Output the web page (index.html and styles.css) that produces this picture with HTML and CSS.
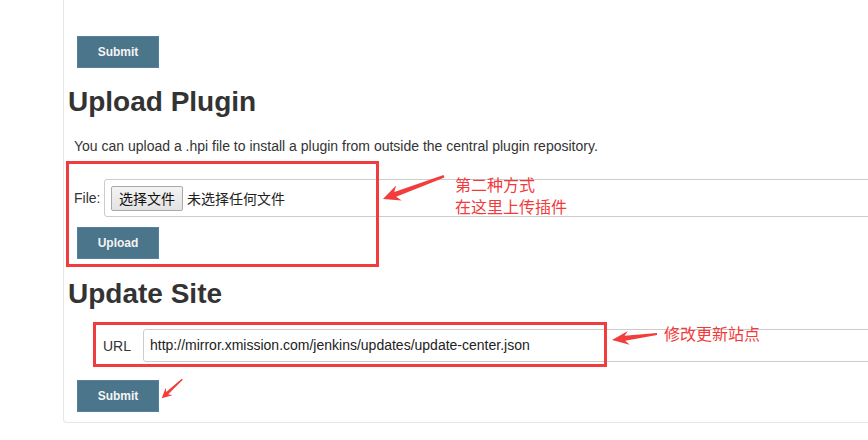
FILE: index.html
```html
<!DOCTYPE html>
<html lang="zh">
<head>
<meta charset="utf-8">
<title>Plugin Manager - Advanced</title>
<link rel="stylesheet" href="styles.css">
</head>
<body>
<div class="panel">
  <button class="btn">Submit</button>
  <h2 class="heading">Upload Plugin</h2>
  <p class="desc">You can upload a .hpi file to install a plugin from outside the central plugin repository.</p>
  <div class="file-row">
    <span class="file-label">File:</span>
    <div class="file-box">
      <span class="file-btn">选择文件</span>
      <span class="file-none">未选择任何文件</span>
    </div>
  </div>
  <button class="btn btn-upload">Upload</button>
  <h2 class="heading heading-site">Update Site</h2>
  <div class="url-row">
    <span class="url-label">URL</span>
    <div class="url-box">http://mirror.xmission.com/jenkins/updates/update-center.json</div>
  </div>
  <button class="btn btn-submit2">Submit</button>
</div>

<svg class="marks" width="868" height="440" viewBox="0 0 868 440">
  <rect x="67.5" y="162.5" width="310" height="103" fill="none" stroke="#f03c3c" stroke-width="3"/>
  <rect x="94.5" y="323.5" width="511" height="42" fill="none" stroke="#f03c3c" stroke-width="3"/>
  <polygon fill="#f23d3d" points="383,199 396.1,185.5 394.3,192.1 443.5,175 444.5,177.5 396.1,196.7 401.7,200.5"/>
  <polygon fill="#f23d3d" points="612,340 627.9,330.9 624.6,335.8 657,333 657,335 625.2,340.8 629.7,344.7"/>
  <polygon fill="#f23d3d" points="161.7,398.3 165.7,387.8 166.2,392.1 181.8,378.8 182.8,379.8 168.2,394.3 172.4,395.2"/>
</svg>
<div class="note note-upload-1">第二种方式</div>
<div class="note note-upload-2">在这里上传插件</div>
<div class="note note-site">修改更新站点</div>
</body>
</html>
```
FILE: styles.css
```css
html, body {
  margin: 0;
  padding: 0;
  overflow: hidden;
  background: #fff;
}
body {
  width: 868px;
  height: 440px;
  position: relative;
  font-family: "Liberation Sans", Arial, "Noto Sans CJK SC", sans-serif;
  color: #333;
}
.panel {
  margin-left: 63px;
  width: 805px;
  overflow: hidden;
  box-sizing: border-box;
  border-left: 1px solid #e6e6e6;
  border-bottom: 1px solid #e6e6e6;
  border-bottom-left-radius: 4px;
  padding: 36px 0 10px 4px;
}
.btn {
  display: block;
  margin: 0 0 0 9px;
  width: 82px;
  height: 32px;
  box-sizing: border-box;
  background: #4b758b;
  border: 1px solid #56819a;
  color: #f4f4f4;
  font-family: "Liberation Sans", Arial, sans-serif;
  font-weight: bold;
  font-size: 12px;
  padding: 0;
  cursor: pointer;
}
.heading {
  margin: 18px 0 0 0;
  font-size: 28px;
  line-height: 32px;
  font-weight: bold;
  color: #333;
}
.desc {
  margin: 18px 0 0 6px;
  font-size: 14px;
  line-height: 20px;
  color: #333;
}
.file-row {
  margin: 23px -20px 0 6px;
  display: flex;
  align-items: center;
  height: 38px;
}
.file-label {
  width: 30px;
  font-size: 14px;
  color: #333;
}
.file-box {
  flex: 1;
  height: 38px;
  box-sizing: border-box;
  border: 1px solid #ccc;
  border-radius: 3px;
  display: flex;
  align-items: center;
  padding-left: 6px;
}
.file-btn {
  width: 72px;
  height: 25px;
  box-sizing: border-box;
  border: 1px solid #a9a9a9;
  border-radius: 2px;
  background: linear-gradient(#f3f3f3, #e3e3e3);
  font-family: "Noto Sans CJK SC", sans-serif;
  font-size: 14px;
  line-height: 23px;
  text-align: center;
  color: #111;
}
.file-none {
  margin-left: 4px;
  font-family: "Noto Sans CJK SC", sans-serif;
  font-size: 14px;
  color: #222;
}
.btn-upload {
  margin-top: 10px;
}
.heading-site {
  margin-top: 19px;
}
.url-row {
  margin: 19px -20px 0 35px;
  display: flex;
  align-items: center;
  height: 33px;
}
.url-label {
  width: 40px;
  font-size: 14px;
  color: #333;
}
.url-box {
  flex: 1;
  height: 33px;
  box-sizing: border-box;
  border: 1px solid #ccc;
  border-radius: 3px;
  padding-left: 6px;
  font-size: 14px;
  line-height: 31px;
  color: #222;
}
.btn-submit2 {
  margin-top: 18px;
}
.marks {
  position: absolute;
  left: 0;
  top: 0;
}
.note {
  position: absolute;
  font-family: "Noto Sans CJK SC", sans-serif;
  font-size: 16px;
  line-height: 21px;
  color: #f33a3a;
}
.note-upload-1 {
  left: 455px;
  top: 174px;
}
.note-upload-2 {
  left: 455px;
  top: 196px;
}
.note-site {
  left: 664px;
  top: 323px;
}
```
